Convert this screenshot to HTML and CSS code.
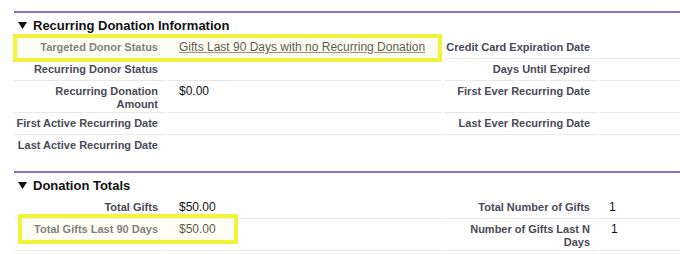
FILE: index.html
```html
<!DOCTYPE html>
<html>
<head>
<meta charset="utf-8">
<link rel="stylesheet" href="styles.css">
</head>
<body>
<div class="page">
  <section class="block">
    <h3 class="sub"><svg class="tri" width="9" height="7" viewBox="0 0 9 7"><polygon points="0,0 9,0 4.5,7" fill="#111"/></svg>Recurring Donation Information</h3>
    <div class="row">
      <div class="lab">Targeted Donor Status</div>
      <div class="val"><span class="link">Gifts Last 90 Days with no Recurring Donation</span></div>
      <div class="lab">Credit Card Expiration Date</div>
      <div class="val"></div>
      <div class="hl hl-one"></div>
    </div>
    <div class="row">
      <div class="lab">Recurring Donor Status</div>
      <div class="val"></div>
      <div class="lab">Days Until Expired</div>
      <div class="val"></div>
    </div>
    <div class="row">
      <div class="lab">Recurring Donation Amount</div>
      <div class="val">$0.00</div>
      <div class="lab">First Ever Recurring Date</div>
      <div class="val"></div>
    </div>
    <div class="row">
      <div class="lab">First Active Recurring Date</div>
      <div class="val"></div>
      <div class="lab">Last Ever Recurring Date</div>
      <div class="val"></div>
    </div>
    <div class="row last">
      <div class="lab">Last Active Recurring Date</div>
      <div class="val"></div>
      <div class="lab"></div>
      <div class="val"></div>
    </div>
  </section>
  <section class="block">
    <h3 class="sub"><svg class="tri" width="9" height="7" viewBox="0 0 9 7"><polygon points="0,0 9,0 4.5,7" fill="#111"/></svg>Donation Totals</h3>
    <div class="row">
      <div class="lab">Total Gifts</div>
      <div class="val">$50.00</div>
      <div class="lab">Total Number of Gifts</div>
      <div class="val">1</div>
    </div>
    <div class="row">
      <div class="lab">Total Gifts Last 90 Days</div>
      <div class="val">$50.00</div>
      <div class="lab">Number of Gifts Last N Days</div>
      <div class="val">1</div>
      <div class="hl hl-two"></div>
    </div>
  </section>
</div>
</body>
</html>
```

FILE: styles.css
```css
* { box-sizing: border-box; }
html, body { margin: 0; padding: 0; background: #fff; }
body { font-family: "Liberation Sans", Arial, sans-serif; width: 680px; height: 254px; overflow: hidden; }
.page { padding: 11px 0 0 14px; }
.block { border-top: 2px solid #8a70c3; margin-bottom: 14px; }
.sub {
  margin: 0;
  height: 24px;
  display: flex;
  align-items: center;
  font-size: 13px;
  font-weight: bold;
  color: #111;
  padding-left: 4px;
}
.tri { margin-right: 6px; }
.row {
  position: relative;
  display: grid;
  grid-template-columns: 151px 275px 153px 1fr;
  column-gap: 2px;
}
.lab, .val {
  border-bottom: 1px solid #e8e8e8;
  min-height: 22px;
}
.row.last .lab, .row.last .val { border-bottom-color: transparent; }
.lab {
  text-align: right;
  font-size: 11px;
  line-height: 13px;
  font-weight: bold;
  color: #4a4a56;
  padding: 4px 7px 1px 0;
}
.val {
  font-size: 12px;
  line-height: 15px;
  color: #111;
  padding: 3px 0 3px 12px;
}
.row .val:last-of-type { padding-left: 10px; }
.link { text-decoration: underline; text-decoration-color: #6b6b4a; }
.hl {
  position: absolute;
  border: 4px solid #f2f43c;
  background: rgba(252, 252, 215, 0.3);
}
.hl-one { left: -1px; top: -3px; width: 429px; height: 28px; }
.hl-two { left: 4px; top: -5px; width: 220px; height: 30px; }
```
